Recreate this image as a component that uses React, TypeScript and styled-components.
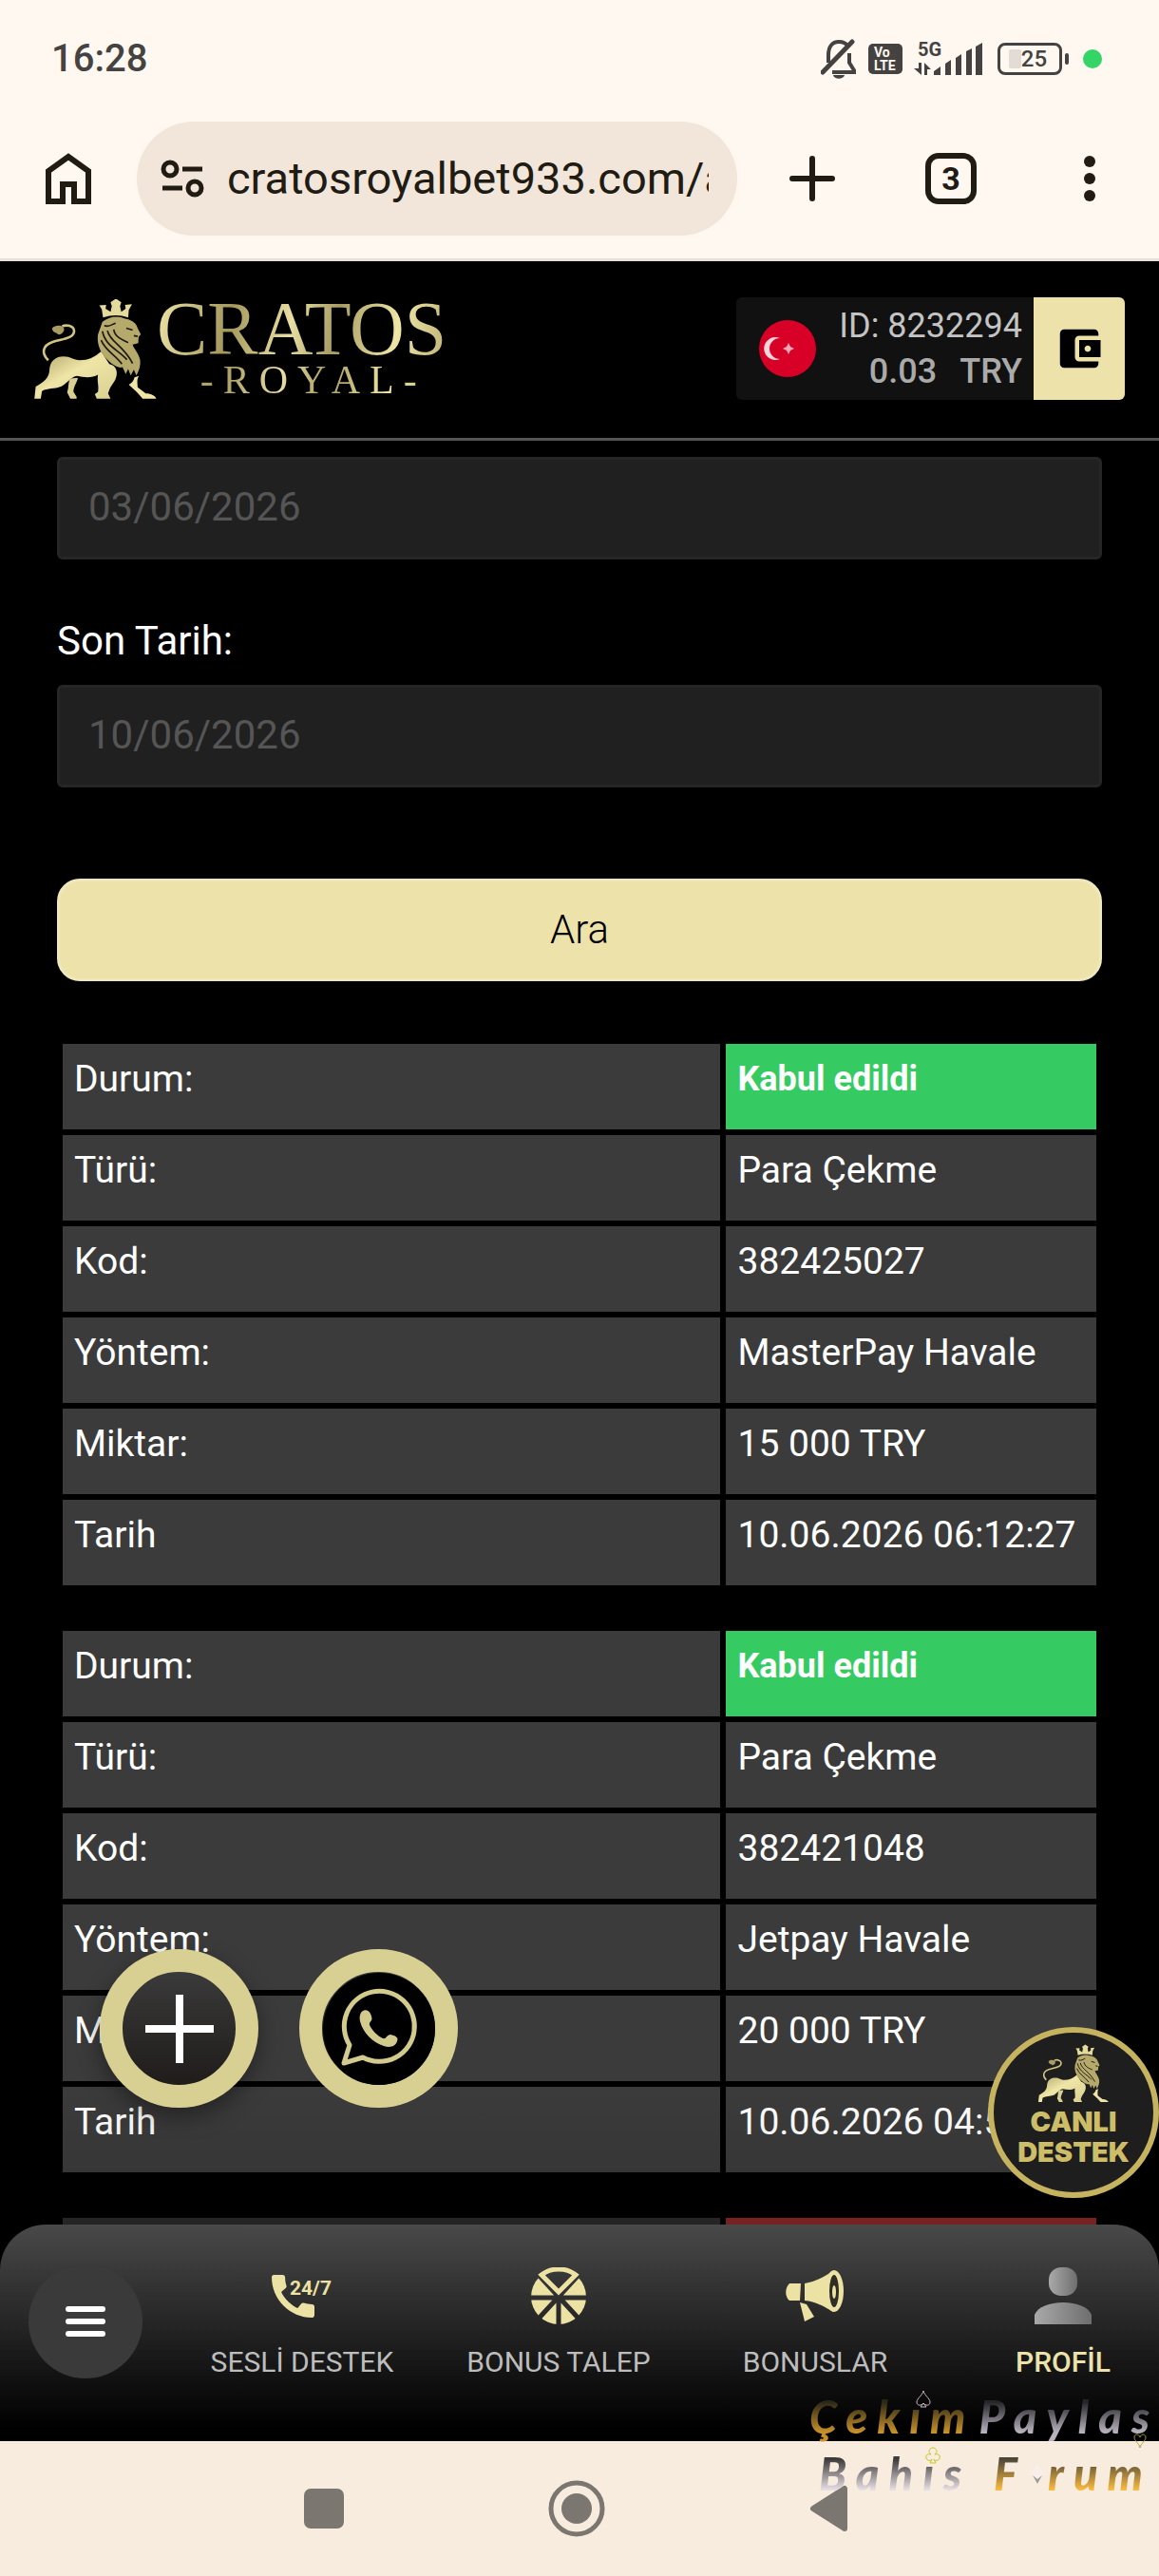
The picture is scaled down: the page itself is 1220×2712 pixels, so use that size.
import { useState } from "react";
import styled, { createGlobalStyle, css } from "styled-components";
import { MdAccountBalanceWallet } from "react-icons/md";

export default function App() {
  const [url, setUrl] = useState("cratosroyalbet933.com/a");
  const [dates, setDates] = useState({ from: "03/06/2026", to: "10/06/2026" });

  return (
    <Phone>
      <GlobalStyle />
      <StatusBar>
        <Clock>16:28</Clock>
        <StatusIcons>
          <BellOffIcon />
          <VolteBadge>
            <span>Vo</span>
            <span>LTE</span>
          </VolteBadge>
          <Signal>
            <SignalLabel>5G</SignalLabel>
            <SignalIcon />
          </Signal>
          <Battery>
            <BatteryLevel />
            25
          </Battery>
          <PrivacyDot />
        </StatusIcons>
      </StatusBar>

      <BrowserBar>
        <HomeButton aria-label="Ana sayfa">
          <HomeIcon />
        </HomeButton>
        <AddressBar>
          <TuneIcon />
          <AddressInput
            aria-label="Adres"
            value={url}
            onChange={(e) => setUrl(e.target.value)}
          />
        </AddressBar>
        <BrowserButton aria-label="Yeni sekme">
          <svg width="48" height="48" viewBox="0 0 48 48">
            <path
              d="M24 3V45M3 24H45"
              stroke="#201b13"
              strokeWidth="6"
              strokeLinecap="round"
            />
          </svg>
        </BrowserButton>
        <BrowserButton aria-label="Sekmeler">
          <TabCount>3</TabCount>
        </BrowserButton>
        <BrowserButton aria-label="Menü">
          <svg width="12" height="48" viewBox="0 0 12 48" fill="#201b13">
            <circle cx="6" cy="6" r="6" />
            <circle cx="6" cy="24" r="6" />
            <circle cx="6" cy="42" r="6" />
          </svg>
        </BrowserButton>
      </BrowserBar>

      <Site>
        <SiteHeader>
          <Logo href="#">
            <Lion width={129} height={105} />
            <LogoText>
              <LogoTitle>CRATOS</LogoTitle>
              <LogoSubtitle>-ROYAL-</LogoSubtitle>
            </LogoText>
          </Logo>
          <Account>
            <Flag />
            <AccountInfo>
              <div>ID: 8232294</div>
              <Balance>
                <span>0.03</span>
                <span>TRY</span>
              </Balance>
            </AccountInfo>
            <WalletButton aria-label="Cüzdan">
              <MdAccountBalanceWallet />
            </WalletButton>
          </Account>
        </SiteHeader>

        <Content>
          <DateInput
            aria-label="Başlangıç Tarihi"
            value={dates.from}
            onChange={(e) => setDates({ ...dates, from: e.target.value })}
          />
          <DateLabel htmlFor="end-date">Son Tarih:</DateLabel>
          <DateInput
            id="end-date"
            value={dates.to}
            onChange={(e) => setDates({ ...dates, to: e.target.value })}
          />
          <SearchButton>Ara</SearchButton>

          {transactions.map((transaction, index) => (
            <RecordTable key={index}>
              <tbody>
                <tr>
                  <LabelCell scope="row">{transaction.rows.length ? "Durum:" : ""}</LabelCell>
                  <StatusCell $accepted={transaction.accepted}>
                    {transaction.status}
                  </StatusCell>
                </tr>
                {transaction.rows.map(([label, value]) => (
                  <tr key={label}>
                    <LabelCell scope="row">{label}</LabelCell>
                    <ValueCell>{value}</ValueCell>
                  </tr>
                ))}
              </tbody>
            </RecordTable>
          ))}
        </Content>

        <Fade />

        <FloatingActions>
          <RoundButton aria-label="Ekle" $raised>
            <svg width="74" height="74" viewBox="0 0 74 74">
              <path d="M37 1V73M1 37H73" stroke="#fff" strokeWidth="8" />
            </svg>
          </RoundButton>
          <RoundButton aria-label="WhatsApp">
            <WhatsappIcon />
          </RoundButton>
        </FloatingActions>

        <SupportButton>
          <Lion width={74} height={62} />
          <span>CANLI</span>
          <span>DESTEK</span>
        </SupportButton>

        <BottomNav>
          <MenuButton aria-label="Menü">
            <i />
            <i />
            <i />
          </MenuButton>
          <NavItem href="#">
            <CallIcon />
            SESLİ DESTEK
          </NavItem>
          <NavItem href="#">
            <WheelIcon />
            BONUS TALEP
          </NavItem>
          <NavItem href="#">
            <MegaphoneIcon />
            BONUSLAR
          </NavItem>
          <ProfileItem href="#">
            <ProfileIcon />
            PROFİL
          </ProfileItem>
        </BottomNav>
      </Site>

      <SystemBar>
        <SystemButton aria-label="Son uygulamalar">
          <svg width="60" height="60" viewBox="0 0 60 60">
            <rect x="9" y="9" width="42" height="42" rx="7" fill="#7b766f" />
          </svg>
        </SystemButton>
        <SystemButton aria-label="Ana ekran">
          <svg width="60" height="60" viewBox="0 0 60 60">
            <circle cx="30" cy="30" r="27" fill="none" stroke="#7b766f" strokeWidth="5" />
            <circle cx="30" cy="30" r="16" fill="#7b766f" />
          </svg>
        </SystemButton>
        <SystemButton aria-label="Geri">
          <svg width="60" height="60" viewBox="0 0 60 60">
            <path
              d="M13 30L46 9V51Z"
              fill="#7b766f"
              stroke="#7b766f"
              strokeWidth="6"
              strokeLinejoin="round"
            />
          </svg>
        </SystemButton>
      </SystemBar>

      <Watermark>
        <WatermarkLine>
          <Word $from="#2c2817" $to="#c8912a">
            Çekım
          </Word>
          <Word $from="#26262a" $to="#b9b2be">
            Paylas
          </Word>
          <Suit $x={112} $y={2}>
            <SpadeShape />
          </Suit>
          <Suit $x={340} $y={46}>
            <HeartShape />
          </Suit>
        </WatermarkLine>
        <WatermarkLine $indent>
          <Word $from="#3c3a3a" $to="#e6dde2">
            {"Bahıs "}
          </Word>
          <Word $from="#4c4638" $to="#f7b93e">
            F
          </Word>
          <DiamondShape />
          <Word $from="#4c4638" $to="#f7b93e">
            rum
          </Word>
          <Suit $x={122} $y={2}>
            <ClubShape />
          </Suit>
        </WatermarkLine>
      </Watermark>
    </Phone>
  );
}

interface Transaction {
  accepted: boolean;
  status: string;
  rows: [string, string][];
}

const transactions: Transaction[] = [
  {
    accepted: true,
    status: "Kabul edildi",
    rows: [
      ["Türü:", "Para Çekme"],
      ["Kod:", "382425027"],
      ["Yöntem:", "MasterPay Havale"],
      ["Miktar:", "15 000 TRY"],
      ["Tarih", "10.06.2026 06:12:27"],
    ],
  },
  {
    accepted: true,
    status: "Kabul edildi",
    rows: [
      ["Türü:", "Para Çekme"],
      ["Kod:", "382421048"],
      ["Yöntem:", "Jetpay Havale"],
      ["Miktar:", "20 000 TRY"],
      ["Tarih", "10.06.2026 04:5"],
    ],
  },
  { accepted: false, status: "", rows: [] },
];

function BellOffIcon() {
  return (
    <svg width="38" height="42" viewBox="0 0 38 42">
      <path
        d="M8 25V17C8 8 12 3 19 3C24 3 27 5 29 8M30 15V25L35 33V35H12"
        fill="none"
        stroke="#454341"
        strokeWidth="4"
      />
      <path d="M2 35L33 3" stroke="#454341" strokeWidth="5" strokeLinecap="round" />
      <path d="M13 38H25C24 43 14 43 13 38Z" fill="#454341" />
    </svg>
  );
}

function SignalIcon() {
  return (
    <svg width="72" height="34" viewBox="0 0 72 34" fill="#454341">
      <path d="M5 21H8V34L0 27H5ZM11 34V21L18 28H14V34Z" />
      <path d="M21 30L28 25V34H21ZM33 22L39 18V34H33ZM44 16L50 12V34H44ZM55 9L61 6V34H55ZM65 4L72 0V34H65Z" />
    </svg>
  );
}

function HomeIcon() {
  return (
    <svg width="48" height="54" viewBox="0 0 48 54">
      <path
        d="M3 51V19L24 4L45 19V51H30V33H18V51Z"
        fill="none"
        stroke="#201b13"
        strokeWidth="6"
      />
    </svg>
  );
}

function TuneIcon() {
  return (
    <svg width="46" height="40" viewBox="0 0 46 40" fill="none" stroke="#201b13" strokeWidth="5">
      <circle cx="10" cy="10" r="7" />
      <path d="M23 10H44M2 30H23" />
      <circle cx="36" cy="30" r="7" />
    </svg>
  );
}

function Flag() {
  return (
    <svg width="60" height="60" viewBox="0 0 60 60">
      <circle cx="30" cy="30" r="30" fill="#d80027" />
      <path d="M22 19A12 12 0 1 0 22 41A11 11 0 1 1 22 19Z" fill="#f9d3da" />
      <path d="M25 30L29 28L31 24L33 28L37 30L33 32L31 36L29 32Z" fill="#f3a6b4" />
    </svg>
  );
}

function Lion({ width, height }: { width: number; height: number }) {
  const id = `gold-${width}`;
  return (
    <svg width={width} height={height} viewBox="24 40 388 317">
      <defs>
        <linearGradient id={id} x1="0" y1="0" x2="1" y2="1">
          <stop offset="0" stopColor="#a89c62" />
          <stop offset="0.45" stopColor="#efe5a6" />
          <stop offset="1" stopColor="#d9cf92" />
        </linearGradient>
      </defs>
      <path
        d="M68 234C46 212 48 188 82 176C114 166 152 164 150 140C148 124 126 120 112 126"
        fill="none"
        stroke="#cfc484"
        strokeWidth="8"
      />
      <path d="M80 132C94 118 122 124 118 140C110 156 98 154 95 148C86 146 80 140 80 132Z" fill="#a89c62" />
      <path
        d="M72 262C74 236 92 222 116 222C140 222 148 234 168 234C194 234 216 224 236 206L262 246C280 250 288 264 285 282C282 302 268 312 262 328L258 340L266 356H222L216 342L226 334C230 316 222 300 226 280C206 292 180 288 160 284C140 286 124 312 108 318C88 326 66 322 48 332L44 356H24L28 318C50 306 72 292 72 262Z"
        fill={`url(#${id})`}
      />
      <path
        d="M138 292L162 290C160 304 148 318 148 334L158 350V356H138L128 336C134 320 130 306 138 292Z"
        fill="#d9cf92"
      />
      <path
        d="M342 288L356 284C348 296 352 308 352 320L378 340C396 340 408 348 411 356H368L350 336L324 312C334 306 340 298 342 288Z"
        fill="#efe5a6"
      />
      <path
        d="M240 112C258 96 290 90 312 102C336 106 348 118 352 132L362 152L355 160L354 180L336 184C340 198 356 212 360 234C362 252 356 268 348 282L340 264L330 282L322 262L314 278L304 256C286 262 262 240 246 222C230 202 222 176 226 152Z"
        fill="#b5a96b"
      />
      <path
        d="M246 124C262 130 270 120 282 116M240 142C250 190 290 200 318 232M256 140C264 176 308 188 336 244M276 136C280 160 300 168 322 178M316 132L336 138M236 170C250 204 280 216 302 246M340 156L352 158"
        fill="none"
        stroke="#1c190d"
        strokeWidth="5"
      />
      <path
        d="M242 98L238 72L230 60L252 58L250 70L266 80L270 62L266 50L283 38L300 50L296 62L300 80L314 70L312 58L334 56L324 74L322 98Q283 84 242 98Z"
        fill="#e4da9b"
      />
    </svg>
  );
}

function WhatsappIcon() {
  return (
    <svg width="118" height="118" viewBox="0 0 118 118">
      <circle cx="59" cy="59" r="59" fill="#000" />
      <path
        d="M22 95L28 76A37 37 0 1 1 42 89Z"
        fill="none"
        stroke="#d3ca8e"
        strokeWidth="5"
        strokeLinejoin="round"
      />
      <path
        d="M42 40C46 38 50 41 51 46C53 51 48 51 49 55C52 61 57 66 63 69C67 70 67 65 71 65C76 66 80 68 78 72C76 78 70 79 64 77C52 73 42 63 39 51C38 46 39 42 42 40Z"
        fill="#d3ca8e"
      />
    </svg>
  );
}

function CallIcon() {
  return (
    <svg width="64" height="60" viewBox="0 0 64 60" fill="#ece2a4">
      <path
        transform="translate(-7.5 .5) scale(2.5)"
        d="M20.01 15.38c-1.23 0-2.42-.2-3.53-.56a.977.977 0 0 0-1.01.24l-1.57 1.97c-2.83-1.35-5.48-3.9-6.89-6.83l1.95-1.66c.27-.28.35-.67.24-1.02-.37-1.11-.56-2.3-.56-3.53 0-.54-.45-.99-.99-.99H4.19C3.65 3 3 3.24 3 3.99 3 13.28 10.73 21 20.01 21c.71 0 .99-.63.99-1.18v-3.45c0-.54-.45-.99-.99-.99z"
      />
      <CallHours x="19" y="29">
        24/7
      </CallHours>
    </svg>
  );
}

function WheelIcon() {
  return (
    <svg width="60" height="60" viewBox="0 0 60 60">
      <mask id="wheel-gaps">
        <circle cx="30" cy="31" r="29" fill="#fff" />
        <path d="M0 32H60M7 6L53 56M53 6L7 56M30 31V60" stroke="#000" strokeWidth="5" />
        <path d="M4 0L30 31L56 0Z" fill="#000" />
      </mask>
      <rect width="60" height="60" fill="#ece2a4" mask="url(#wheel-gaps)" />
      <path
        d="M30 26L12 8C22 0 38 0 48 8Z"
        fill="none"
        stroke="#ece2a4"
        strokeWidth="5"
      />
    </svg>
  );
}

function MegaphoneIcon() {
  return (
    <svg width="62" height="60" viewBox="0 -4 62 60" fill="#ece2a4">
      <path d="M4 13H16L15 31H4C-1 27 -1 18 4 13Z" />
      <path d="M20 13C32 11 40 6 50 0V43C40 37 32 32 20 31Z" />
      <ellipse cx="51" cy="21" rx="10" ry="22" />
      <ellipse cx="51" cy="21" rx="5" ry="17" fill="#2e2d26" />
      <ellipse cx="51" cy="22" rx="2" ry="7" />
      <path d="M15 33L22 35L30 48L20 53Z" />
    </svg>
  );
}

function ProfileIcon() {
  return (
    <svg width="60" height="60" viewBox="0 0 60 60" fill="url(#profile-shade)">
      <defs>
        <linearGradient id="profile-shade">
          <stop offset="0" stopColor="#a9a9a9" />
          <stop offset="1" stopColor="#6e6e6e" />
        </linearGradient>
      </defs>
      <rect x="15" y="0" width="30" height="30" rx="13" />
      <path d="M0 60V50C3 42 16 37 30 37S57 42 60 50V60Z" />
    </svg>
  );
}

function SpadeShape() {
  return (
    <svg width="16" height="20" viewBox="0 0 16 20" fill="none" stroke="#c9b9bd">
      <path d="M8 1C9 6 15 9 15 13C15 17 10 17 8 14C6 17 1 17 1 13C1 9 7 6 8 1ZM8 14L5 18H11Z" />
    </svg>
  );
}

function HeartShape() {
  return (
    <svg width="16" height="20" viewBox="0 0 16 20" fill="none" stroke="#a8a02a">
      <path d="M8 17C7 12 2 10 2 6C2 2 7 2 8 6C9 2 14 2 14 6C14 10 9 12 8 17Z" />
    </svg>
  );
}

function ClubShape() {
  return (
    <svg width="16" height="20" viewBox="0 0 16 20" fill="none" stroke="#c9c51f">
      <path d="M6 8C2 5 5 1 8 1S14 5 10 8C14 7 16 9 15 12C14 15 10 15 9 13L11 17H5L7 13C6 15 2 15 1 12C0 9 2 7 6 8Z" />
    </svg>
  );
}

function DiamondShape() {
  return (
    <svg width="14" height="28" viewBox="0 0 14 28">
      <path d="M7 3L13 14L7 25L1 14Z" fill="#f9eeea" />
      <path d="M2 16L7 25L12 16L7 20Z" fill="#9ba095" />
    </svg>
  );
}

const gold = "#ede2aa";

const GlobalStyle = createGlobalStyle`
  * {
    box-sizing: border-box;
  }

  body {
    margin: 0;
    background: #000;
    font-family: Roboto, sans-serif;
  }

  button,
  input {
    font-family: inherit;
    border: 0;
    padding: 0;
    outline: 0;
  }

  svg {
    display: block;
    flex-shrink: 0;
  }
`;

const Phone = styled.div`
  position: relative;
  display: flex;
  flex-direction: column;
  height: 100vh;
  overflow: hidden;
`;

const StatusBar = styled.div`
  display: flex;
  align-items: center;
  justify-content: space-between;
  height: 120px;
  padding: 3px 60px 0 54px;
  background: #fff8f1;
  color: #454341;
`;

const Clock = styled.time`
  font-size: 40px;
  font-weight: 500;
  line-height: 48px;
`;

const StatusIcons = styled.div`
  display: flex;
  align-items: center;
  gap: 12px;
`;

const VolteBadge = styled.div`
  display: flex;
  flex-direction: column;
  width: 36px;
  height: 32px;
  padding: 2px 6px;
  border-radius: 5px;
  background: #454341;
  color: #fff8f1;
  font-size: 14px;
  font-weight: 700;
  line-height: 14px;
`;

const Signal = styled.div`
  position: relative;
`;

const SignalLabel = styled.span`
  position: absolute;
  top: -3px;
  left: 4px;
  font-size: 20px;
  font-weight: 700;
  line-height: 20px;
`;

const Battery = styled.div`
  position: relative;
  display: flex;
  align-items: center;
  justify-content: center;
  width: 68px;
  height: 34px;
  margin: 0 10px 0 4px;
  padding-right: 4px;
  border: 3px solid #454341;
  border-radius: 8px;
  font-size: 24px;
  font-weight: 500;

  &::after {
    content: "";
    position: absolute;
    right: -10px;
    width: 4px;
    height: 12px;
    border-radius: 2px;
    background: #454341;
  }
`;

const BatteryLevel = styled.span`
  width: 13px;
  height: 20px;
  border-radius: 2px;
  background: #e2dbd6;
`;

const PrivacyDot = styled.span`
  width: 20px;
  height: 20px;
  border-radius: 50%;
  background: #35d466;
`;

const BrowserBar = styled.div`
  display: flex;
  align-items: center;
  padding: 8px 0 24px;
  border-bottom: 3px solid #e9e1d9;
  background: #fff8f1;
`;

const BrowserButton = styled.button`
  display: flex;
  align-items: center;
  justify-content: center;
  width: 146px;
  height: 120px;
  background: none;
`;

const HomeButton = styled(BrowserButton)`
  width: 144px;
`;

const AddressBar = styled.div`
  display: flex;
  flex: 1;
  align-items: center;
  gap: 24px;
  height: 120px;
  min-width: 0;
  margin-right: 6px;
  padding: 0 30px 0 25px;
  border-radius: 60px;
  background: #f1e6d9;
`;

const AddressInput = styled.input`
  flex: 1;
  min-width: 0;
  background: none;
  color: #201b13;
  font-size: 47px;
  line-height: 60px;
`;

const TabCount = styled.span`
  width: 54px;
  height: 54px;
  border: 6px solid #201b13;
  border-radius: 14px;
  color: #201b13;
  font-size: 34px;
  font-weight: 700;
  line-height: 42px;
`;

const Site = styled.div`
  position: relative;
  display: flex;
  flex: 1;
  flex-direction: column;
  min-height: 0;
  overflow: hidden;
  background: #000;
`;

const SiteHeader = styled.header`
  display: flex;
  align-items: center;
  justify-content: space-between;
  padding: 38px 36px 40px;
  border-bottom: 3px solid #555;
`;

const Logo = styled.a`
  display: flex;
  align-items: center;
  text-decoration: none;
`;

const LogoText = styled.span`
  display: flex;
  flex-direction: column;
  align-items: center;
  background: linear-gradient(100deg, #efe5a6, #a3975c 25%, #e9dfa2 45%, #a89c62 60%, #efe5a6 80%, #b9ad70);
  background-clip: text;
  color: transparent;
  font-family: "Liberation Serif", serif;
`;

const LogoTitle = styled.span`
  font-size: 80px;
  line-height: 66px;
`;

const LogoSubtitle = styled.span`
  padding-left: 24px;
  font-size: 42px;
  letter-spacing: 10px;
  line-height: 42px;
`;

const Account = styled.div`
  display: flex;
  align-items: center;
  height: 108px;
  padding-left: 24px;
  border-radius: 6px;
  background: #111;
  overflow: hidden;
`;

const AccountInfo = styled.div`
  margin: 0 12px 0 24px;
  color: #c4c4c4;
  font-size: 36px;
  line-height: 48px;
  text-align: right;
`;

const Balance = styled.div`
  display: flex;
  justify-content: flex-end;
  gap: 24px;
  color: #aaa;
  font-weight: 500;
`;

const WalletButton = styled.button`
  display: flex;
  align-items: center;
  justify-content: center;
  width: 96px;
  height: 108px;
  background: ${gold};
  color: #000;
  font-size: 54px;
`;

const Content = styled.main`
  display: flex;
  flex: 1;
  flex-direction: column;
  min-height: 0;
  padding: 17px 60px 0;
  overflow: hidden;

  > * {
    flex-shrink: 0;
  }
`;

const DateInput = styled.input`
  width: 100%;
  height: 108px;
  padding: 0 30px 4px;
  border: 3px solid #262626;
  border-radius: 6px;
  background: #202020;
  color: #555;
  font-size: 42px;
`;

const DateLabel = styled.label`
  margin: 62px 0 22px;
  color: #fff;
  font-size: 42px;
  line-height: 48px;
`;

const SearchButton = styled.button`
  height: 108px;
  margin: 96px 0 24px;
  padding-bottom: 2px;
  border: 3px solid #efe8bd;
  border-radius: 24px;
  background: ${gold};
  color: #000;
  font-size: 42px;
  font-weight: 300;
`;

const RecordTable = styled.table`
  width: 100%;
  margin-top: 36px;
  border-spacing: 6px;
  table-layout: fixed;
  color: #fff;
  font-size: 39px;
  line-height: 48px;
`;

const cell = css`
  height: 90px;
  padding: 13px 12px;
  background: #3b3b3b;
  font-weight: 400;
  text-align: left;
  vertical-align: top;
  white-space: nowrap;
`;

const LabelCell = styled.th`
  ${cell}
  width: 64%;
`;

const ValueCell = styled.td`
  ${cell}
`;

const StatusCell = styled.td<{ $accepted: boolean }>`
  ${cell}
  background: ${({ $accepted }) => ($accepted ? "#35cb62" : "#c03636")};
  font-size: 36px;
  font-weight: 700;
`;

const Fade = styled.div`
  position: absolute;
  right: 0;
  bottom: 228px;
  left: 0;
  height: 144px;
  background: linear-gradient(transparent, rgba(0, 0, 0, 0.08) 60%, rgba(0, 0, 0, 0.4));
`;

const FloatingActions = styled.div`
  position: absolute;
  bottom: 351px;
  left: 105px;
  display: flex;
  gap: 43px;
`;

const RoundButton = styled.button<{ $raised?: boolean }>`
  display: flex;
  align-items: center;
  justify-content: center;
  width: 167px;
  height: 167px;
  border: 24px solid #d8d093;
  border-radius: 50%;
  background: linear-gradient(#3a3a3a, #1f1c1a);
  box-shadow: ${({ $raised }) =>
    $raised ? "0 9px 24px rgba(0, 0, 0, 0.4)" : "none"};
`;

const SupportButton = styled.button`
  position: absolute;
  right: 0;
  bottom: 256px;
  display: flex;
  flex-direction: column;
  align-items: center;
  width: 180px;
  height: 180px;
  padding-top: 12px;
  border: 6px solid #c6b35f;
  border-radius: 50%;
  background: #1e1e1e;
  color: #cdbd69;
  font-family: Inter, sans-serif;
  font-size: 29px;
  font-weight: 900;
  line-height: 32px;

  svg {
    margin-bottom: 4px;
  }
`;

const BottomNav = styled.nav`
  position: absolute;
  right: 0;
  bottom: 0;
  left: 0;
  display: grid;
  grid-template-columns: 153px repeat(3, 1fr) 206px;
  height: 228px;
  padding: 42px 21px 0 30px;
  border-radius: 48px 48px 0 0;
  background: linear-gradient(#494949, #2e2e2e 35%, #161616 65%, #000 95%);
`;

const MenuButton = styled.button`
  display: flex;
  flex-direction: column;
  align-items: center;
  justify-content: center;
  gap: 7px;
  width: 120px;
  height: 120px;
  border-radius: 50%;
  background: #3a3a3a;

  i {
    width: 42px;
    height: 6px;
    border-radius: 3px;
    background: #fff;
  }
`;

const NavItem = styled.a`
  display: flex;
  flex-direction: column;
  align-items: center;
  gap: 22px;
  padding-top: 3px;
  color: #bdbdbd;
  font-size: 30px;
  line-height: 36px;
  text-decoration: none;
  white-space: nowrap;
`;

const ProfileItem = styled(NavItem)`
  justify-self: end;
  width: 160px;
  color: ${gold};
  font-weight: 500;
`;

const CallHours = styled.text`
  font-size: 21px;
  font-weight: 700;
`;

const SystemBar = styled.div`
  display: flex;
  align-items: center;
  justify-content: center;
  gap: 206px;
  height: 142px;
  padding-right: 6px;
  background: #f8ecdf;
`;

const SystemButton = styled.button`
  background: none;
`;

const Watermark = styled.div`
  position: absolute;
  right: 0;
  bottom: 78px;
  width: 368px;
  pointer-events: none;
`;

const WatermarkLine = styled.div<{ $indent?: boolean }>`
  position: relative;
  display: flex;
  align-items: center;
  gap: 4px;
  padding-left: ${({ $indent }) => ($indent ? "10px" : "0")};
`;

const Word = styled.span<{ $from: string; $to: string }>`
  background: linear-gradient(${({ $from }) => $from} 25%, ${({ $to }) => $to} 78%);
  background-clip: text;
  color: transparent;
  font-family: Lato, sans-serif;
  font-size: 47px;
  font-style: italic;
  font-weight: 900;
  letter-spacing: 10px;
  line-height: 60px;
  white-space: pre;
`;

const Suit = styled.span<{ $x: number; $y: number }>`
  position: absolute;
  top: ${({ $y }) => $y}px;
  left: ${({ $x }) => $x}px;
`;
